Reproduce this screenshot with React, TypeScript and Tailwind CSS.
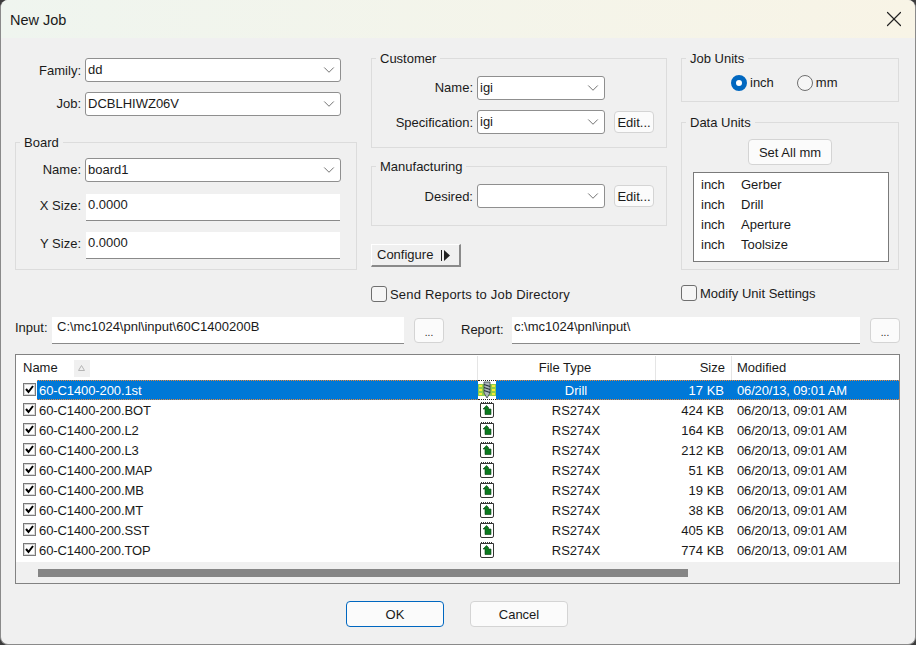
import { X, ChevronDown } from 'lucide-react';

const files = [
  { name: '60-C1400-200.1st', type: 'Drill', size: '17 KB' },
  { name: '60-C1400-200.BOT', type: 'RS274X', size: '424 KB' },
  { name: '60-C1400-200.L2', type: 'RS274X', size: '164 KB' },
  { name: '60-C1400-200.L3', type: 'RS274X', size: '212 KB' },
  { name: '60-C1400-200.MAP', type: 'RS274X', size: '51 KB' },
  { name: '60-C1400-200.MB', type: 'RS274X', size: '19 KB' },
  { name: '60-C1400-200.MT', type: 'RS274X', size: '38 KB' },
  { name: '60-C1400-200.SST', type: 'RS274X', size: '405 KB' },
  { name: '60-C1400-200.TOP', type: 'RS274X', size: '774 KB' },
];

const dataUnits = ['Gerber', 'Drill', 'Aperture', 'Toolsize'];

function Combo({ value, wide }: { value: string; wide?: boolean }) {
  return (
    <div className={`${wide ? 'w-[256px]' : 'w-[128px]'} h-[24px] bg-white border border-[#8f8f8f] rounded-[3px] flex items-center justify-between pl-[2px] pr-[2px] shrink-0`}>
      <span>{value}</span>
      <ChevronDown className="w-[18px] h-[18px] text-[#555555]" strokeWidth={1.1} />
    </div>
  );
}

function Field({ value, className }: { value: string; className: string }) {
  return <div className={`${className} bg-white border-b border-[#8a8a8a] shrink-0`}>{value}</div>;
}

function Btn({ label, className }: { label: string; className: string }) {
  return (
    <div className={`${className} bg-[#fbfbfb] border rounded-[4px] flex items-center justify-center pt-[1px] shrink-0`}>
      {label}
    </div>
  );
}

function DotsBtn() {
  return (
    <div className="w-[30px] h-[25px] ml-[10px] bg-[#fbfbfb] border border-[#d4d4d4] rounded-[4px] flex items-end justify-center pb-[3px] text-[10px] leading-[12px] shrink-0">
      ...
    </div>
  );
}

function Group({ title, className, children }: { title: string; className: string; children: React.ReactNode }) {
  return (
    <div className={`${className} relative border border-[#dcdcdc]`}>
      <span className="absolute -top-[8px] left-[4px] bg-[#f0f0f0] px-[4px] leading-[16px]">{title}</span>
      {children}
    </div>
  );
}

function BigCheck({ label, className, textClass }: { label: string; className: string; textClass?: string }) {
  return (
    <div className={`${className} h-[16px] flex items-center gap-[3px]`}>
      <div className="w-[16px] h-[16px] rounded-[3px] border border-[#6f6f6f] bg-[#f6f6f6]" />
      <span className={`pt-[1px] ${textClass ?? ''}`}>{label}</span>
    </div>
  );
}

function RowCheck() {
  return (
    <svg width="13" height="13" viewBox="0 0 13 13" className="shrink-0 -mt-[2px]">
      <rect x="0.5" y="0.5" width="12" height="12" fill="#ffffff" stroke="#7a7a7a" />
      <rect x="1.5" y="1.5" width="10" height="10" fill="none" stroke="#d8d8d8" />
      <path d="M3 6 L5.5 9 L10 3" fill="none" stroke="#000000" strokeWidth="2" />
    </svg>
  );
}

function DocIcon() {
  return (
    <svg width="14" height="17" viewBox="0 0 14 17" className="-mt-[1px]">
      <path d="M0.5 2.5 H13.5 V15 Q13.5 16.5 12 16.5 H2 Q0.5 16.5 0.5 15 Z" fill="#ffffff" stroke="#333333" />
      <path d="M1 1.5 H13" stroke="#333333" strokeDasharray="1 1" />
      <path d="M3 8 L6.5 4.5 L8.5 6.5 V8 H11 V13.5 H5 V8 Z" fill="#0b7a1e" stroke="#063d10" strokeWidth="0.6" />
    </svg>
  );
}

function DrillIcon() {
  return (
    <svg width="18" height="18" viewBox="0 0 18 18">
      <rect x="0" y="3" width="18" height="12" fill="#8fce4a" />
      <rect x="1" y="4" width="3" height="2" fill="#f5e93a" />
      <rect x="1" y="8" width="3" height="2" fill="#f5e93a" />
      <rect x="1" y="12" width="3" height="2" fill="#f5e93a" />
      <rect x="14" y="4" width="3" height="2" fill="#f5e93a" />
      <rect x="14" y="8" width="3" height="2" fill="#f5e93a" />
      <rect x="14" y="12" width="3" height="2" fill="#f5e93a" />
      <path d="M6 1 H12 V12 L9 17 L6 12 Z" fill="#aab4ba" stroke="#39464d" strokeWidth="0.8" />
      <path d="M6 3.5 L12 5.5 M6 6.5 L12 8.5 M6 9.5 L12 11.5" stroke="#26323a" strokeWidth="1.2" />
    </svg>
  );
}

export default function App() {
  return (
    <div className="w-[916px] h-[645px] bg-[#3c3c3c] overflow-hidden text-[13px] leading-[16px] text-[#1a1a1a] font-['Liberation_Sans',Arial,sans-serif]">
      <div className="h-full rounded-t-[8px] rounded-b-[8px] bg-[#f0f0f0] border border-t-0 border-[#8a8a8a] flex flex-col overflow-hidden">
        <div className="h-[38px] shrink-0 flex items-center justify-between pl-[9px] pr-[8px] bg-gradient-to-r from-[#eff5ef] to-[#f8f4e6]">
          <span className="text-[14.5px] pt-[1px]">New Job</span>
          <X className="w-[26px] h-[26px] text-[#222222]" strokeWidth={1.1} />
        </div>

        <div className="flex gap-[14px] pt-[20px] pl-[14px] shrink-0">
          <div className="w-[342px] flex flex-col">
            <div className="flex items-center h-[24px]">
              <span className="w-[70px] pr-[4px] pt-[1px] text-right">Family:</span>
              <Combo value="dd" wide />
            </div>
            <div className="flex items-center h-[24px] mt-[10px]">
              <span className="w-[70px] pr-[4px] text-right">Job:</span>
              <Combo value="DCBLHIWZ06V" wide />
            </div>
            <Group title="Board" className="h-[128px] mt-[26px] pt-[15px]">
              <div className="flex items-center h-[24px]">
                <span className="w-[69px] pr-[4px] text-right">Name:</span>
                <Combo value="board1" wide />
              </div>
              <div className="flex items-center h-[27px] mt-[12px]">
                <span className="w-[70px] pr-[5px] pb-[4px] text-right">X Size:</span>
                <Field value="0.0000" className="w-[254px] h-[27px] pl-[2px] pt-[3px]" />
              </div>
              <div className="flex items-center h-[27px] mt-[11px]">
                <span className="w-[70px] pr-[5px] pb-[4px] text-right">Y Size:</span>
                <Field value="0.0000" className="w-[254px] h-[27px] pl-[2px] pt-[3px]" />
              </div>
            </Group>
          </div>

          <div className="w-[296px] flex flex-col">
            <Group title="Customer" className="h-[90px] pt-[17px]">
              <div className="flex items-center h-[24px]">
                <span className="w-[105px] pr-[4px] text-right">Name:</span>
                <Combo value="igi" />
              </div>
              <div className="flex items-center h-[24px] mt-[10px]">
                <span className="w-[105px] pr-[4px] pt-[1px] text-right">Specification:</span>
                <Combo value="igi" />
                <Btn label="Edit..." className="w-[40px] h-[22px] ml-[9px] border-[#d4d4d4]" />
              </div>
            </Group>
            <Group title="Manufacturing" className="h-[60px] mt-[18px] pt-[17px]">
              <div className="flex items-center h-[24px]">
                <span className="w-[105px] pr-[4px] pt-[1px] text-right">Desired:</span>
                <Combo value="" />
                <Btn label="Edit..." className="w-[40px] h-[22px] ml-[9px] border-[#d4d4d4]" />
              </div>
            </Group>
            <div className="w-[90px] h-[23px] mt-[18px] flex items-center gap-[8px] pl-[5px] bg-[#f0f0f0] border-t border-l border-t-white border-l-white border-r-2 border-b-2 border-r-[#8a8a8a] border-b-[#8a8a8a]">
              <span>Configure</span>
              <svg width="10" height="13" viewBox="0 0 10 13">
                <path d="M0.5 1 V12" stroke="#222222" />
                <path d="M3 1 L9 6.5 L3 12 Z" fill="#222222" />
              </svg>
            </div>
            <BigCheck label="Send Reports to Job Directory" className="mt-[19px]" textClass="tracking-[0.2px]" />
          </div>

          <div className="w-[218px] flex flex-col">
            <Group title="Job Units" className="h-[44px] pt-[15px]">
              <div className="flex items-center">
                <div className="w-[16px] h-[16px] ml-[49px] rounded-full border-[5px] border-[#0067c0] bg-white" />
                <span className="ml-[3px] pt-[1px]">inch</span>
                <div className="w-[16px] h-[16px] ml-[23px] rounded-full border border-[#6f6f6f] bg-[#f6f6f6]" />
                <span className="ml-[3px] pt-[1px]">mm</span>
              </div>
            </Group>
            <Group title="Data Units" className="h-[148px] mt-[20px] pt-[16px]">
              <Btn label="Set All mm" className="w-[84px] h-[26px] ml-[66px] border-[#d4d4d4]" />
              <div className="w-[196px] h-[90px] ml-[11px] mt-[7px] bg-white border border-[#7a7a7a] pt-[2px]">
                {dataUnits.map((unit) => (
                  <div key={unit} className="h-[20px] flex items-center pl-[7px]">
                    <span className="w-[40px]">inch</span>
                    <span>{unit}</span>
                  </div>
                ))}
              </div>
            </Group>
            <BigCheck label="Modify Unit Settings" className="mt-[15px]" />
          </div>
        </div>

        <div className="flex items-center mt-[15px] pl-[14px] shrink-0">
          <span className="w-[37px] pb-[5px]">Input:</span>
          <Field value="C:\mc1024\pnl\input\60C1400200B" className="w-[352px] h-[27px] pl-[5px] pt-[2px]" />
          <DotsBtn />
          <span className="w-[51px] ml-[17px] pb-[1px]">Report:</span>
          <Field value="c:\mc1024\pnl\input\" className="w-[348px] h-[27px] pl-[2px] pt-[2px]" />
          <DotsBtn />
        </div>

        <div className="w-[885px] h-[230px] ml-[14px] mt-[10px] bg-white border border-[#828282] flex flex-col shrink-0">
          <div className="h-[25px] pt-[1px] flex items-stretch shrink-0">
            <div className="w-[462px] flex items-center pl-[7px] border-r border-[#e5e5e5]">
              <span>Name</span>
              <div className="w-[16px] h-[17px] ml-[16px] bg-[#f0f0f0] flex items-center justify-center">
                <svg width="7" height="6" viewBox="0 0 7 6">
                  <path d="M3.5 0.5 L6.5 5.5 H0.5 Z" fill="none" stroke="#b5b5b5" />
                </svg>
              </div>
            </div>
            <div className="w-[178px] flex items-center justify-center border-r border-[#e5e5e5] pr-[3px]">File Type</div>
            <div className="w-[76px] flex items-center justify-end pr-[6px] border-r border-[#e5e5e5]">Size</div>
            <div className="flex-1 flex items-center pl-[5px]">Modified</div>
          </div>

          {files.map((file, i) => {
            const selected = i === 0;
            return (
              <div key={file.name} className="h-[20px] flex items-center shrink-0">
                <div className="w-[21px] pl-[7px] shrink-0">
                  <RowCheck />
                </div>
                <div className={`w-[441px] h-[20px] flex items-center pl-[2px] pt-[1px] tracking-[-0.1px] shrink-0 ${selected ? 'bg-[#0078d7] text-white border-y border-dotted border-[#e8873a]' : ''}`}>
                  {file.name}
                </div>
                <div className={`w-[18px] h-[20px] flex items-center justify-center shrink-0 ${selected ? 'border-y border-dotted border-[#222222]' : ''}`}>
                  {selected ? <DrillIcon /> : <DocIcon />}
                </div>
                <div className={`flex-1 h-[20px] flex items-center pt-[1px] ${selected ? 'bg-[#0078d7] text-white border-y border-dotted border-[#e8873a]' : ''}`}>
                  <span className="w-[160px] text-center">{file.type}</span>
                  <span className="w-[68px] text-right">{file.size}</span>
                  <span className="ml-[13px] tracking-[-0.16px]">06/20/13, 09:01 AM</span>
                </div>
              </div>
            );
          })}

          <div className="mt-auto h-[21px] bg-[#f0f0f0] flex items-center pl-[22px]">
            <div className="w-[650px] h-[8px] bg-[#858585]" />
          </div>
        </div>

        <div className="flex justify-center gap-[26px] mt-[17px] pr-[2px] shrink-0">
          <Btn label="OK" className="w-[98px] h-[26px] border-[#0067c0]" />
          <Btn label="Cancel" className="w-[98px] h-[26px] border-[#d4d4d4]" />
        </div>
      </div>
    </div>
  );
}
